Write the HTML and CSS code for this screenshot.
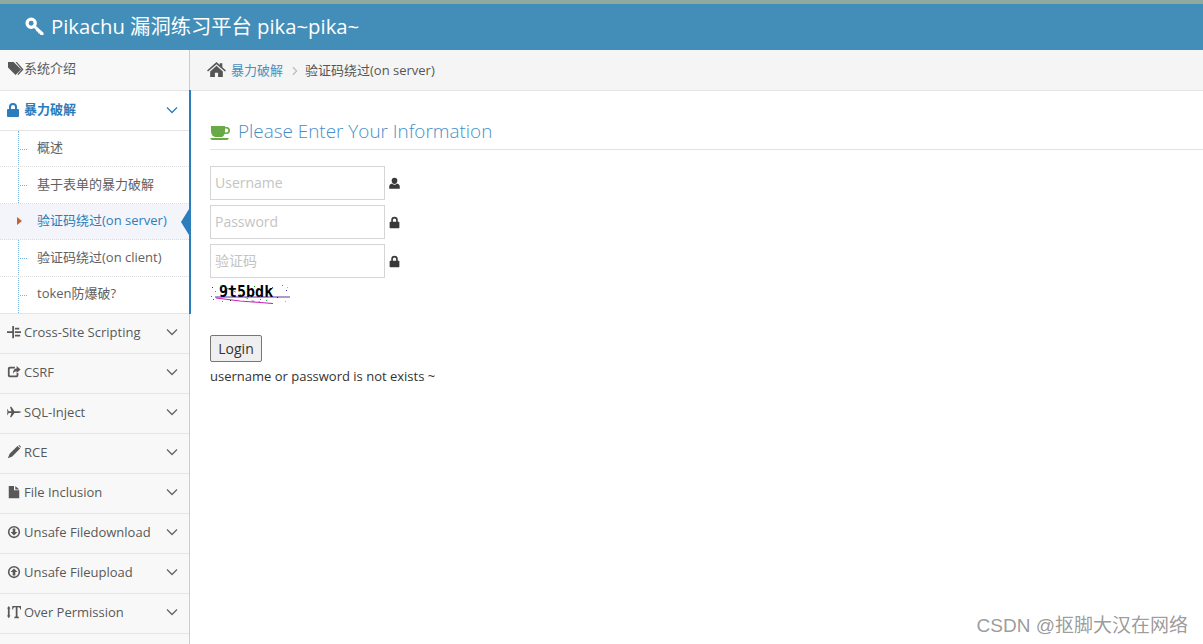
FILE: index.html
```html
<!DOCTYPE html>
<html lang="zh">
<head>
<meta charset="utf-8">
<title>Pikachu</title>
<link rel="stylesheet" href="styles.css">
</head>
<body>
<svg class="defs" width="0" height="0" aria-hidden="true">
  <symbol id="lock" viewBox="0 0 16 16"><path fill="currentColor" fill-rule="evenodd" d="M4 7V5a4 4 0 0 1 8 0v2h1a1 1 0 0 1 1 1v6a1 1 0 0 1-1 1H3a1 1 0 0 1-1-1V8a1 1 0 0 1 1-1h1zm2 0h4V5a2 2 0 0 0-4 0v2z"/></symbol>
  <symbol id="chev" viewBox="0 0 12 8"><path d="M1 1.500l5 5 5-5" fill="none" stroke="currentColor" stroke-width="1.300"/></symbol>
</svg>
<div class="strip"></div>
<header class="navbar">
  <svg class="key" viewBox="0 0 20 20"><circle cx="6.500" cy="6.500" r="4.300" fill="none" stroke="#fff" stroke-width="3.400"/><path fill="#fff" d="M9 11l2-2 8.500 7.500V19h-3l-1-1.500-1.500-.5-.5-1.500-1.500-.5-.5-1.500z"/></svg>
  <span>Pikachu 漏洞练习平台 pika~pika~</span>
</header>
<div class="layout">
  <nav class="sidebar">
    <div class="row first">
      <svg class="ic" viewBox="0 0 18 16"><path fill="currentColor" d="M1 1h6l8 8-6 6-8-8zM9 1h1.500l7 8-5.500 6-1-1 4.500-5z"/></svg>
      <span>系统介绍</span>
    </div>
    <div class="group">
      <div class="row open">
        <svg class="ic"><use href="#lock"/></svg>
        <span class="grow">暴力破解</span>
        <svg class="chev"><use href="#chev"/></svg>
      </div>
      <ul class="sub">
        <li>概述</li>
        <li>基于表单的暴力破解</li>
        <li class="active">验证码绕过(on server)</li>
        <li>验证码绕过(on client)</li>
        <li>token防爆破?</li>
      </ul>
    </div>
    <div class="row">
      <svg class="ic" viewBox="0 0 16 16"><path fill="currentColor" d="M6 1h2v14H6zM0 7h6v2H0zM9 3h5v2H9zM9 7h7v2H9zM9 11h6v2H9z"/></svg>
      <span class="grow">Cross-Site Scripting</span>
      <svg class="chev"><use href="#chev"/></svg>
    </div>
    <div class="row">
      <svg class="ic" viewBox="0 0 16 16"><path fill="currentColor" d="M3 2h6v2H4a1 1 0 0 0-1 1v6a1 1 0 0 0 1 1h6a1 1 0 0 0 1-1V9h2v3a2 2 0 0 1-2 2H3a2 2 0 0 1-2-2V4a2 2 0 0 1 2-2zM11 1l4.500 4L11 9V7C9 7 7.500 8 7 10c-.5-3.500 1.500-6 4-6z"/></svg>
      <span class="grow">CSRF</span>
      <svg class="chev"><use href="#chev"/></svg>
    </div>
    <div class="row">
      <svg class="ic" viewBox="0 0 16 16"><path fill="currentColor" d="M0 4l2 3h3L3.500 2H5l3.500 5H13c2 0 3 .5 3 1s-1 1-3 1H8.500L5 14H3.500L5 9H2l-2 3 .5-4z"/></svg>
      <span class="grow">SQL-Inject</span>
      <svg class="chev"><use href="#chev"/></svg>
    </div>
    <div class="row">
      <svg class="ic" viewBox="0 0 16 16"><path fill="currentColor" d="M12 1l3 3-9 9-5 2 2-5zM13 .5l1-.5 2 2-.5 1z"/></svg>
      <span class="grow">RCE</span>
      <svg class="chev"><use href="#chev"/></svg>
    </div>
    <div class="row">
      <svg class="ic" viewBox="0 0 16 16"><path fill="currentColor" d="M2 1h6v5h6v9H2zM9.500 1L14 5H9.500z"/></svg>
      <span class="grow">File Inclusion</span>
      <svg class="chev"><use href="#chev"/></svg>
    </div>
    <div class="row">
      <svg class="ic" viewBox="0 0 16 16"><path fill="currentColor" fill-rule="evenodd" d="M8 1a7 7 0 1 1 0 14A7 7 0 0 1 8 1zm0 1.800a5.200 5.200 0 1 0 0 10.400A5.200 5.200 0 0 0 8 2.800zM6.500 4h3v4H12l-4 4-4-4h2.500z"/></svg>
      <span class="grow">Unsafe Filedownload</span>
      <svg class="chev"><use href="#chev"/></svg>
    </div>
    <div class="row">
      <svg class="ic" viewBox="0 0 16 16"><path fill="currentColor" fill-rule="evenodd" d="M8 1a7 7 0 1 1 0 14A7 7 0 0 1 8 1zm0 1.800a5.200 5.200 0 1 0 0 10.400A5.200 5.200 0 0 0 8 2.800zM6.500 12h3V8H12L8 4 4 8h2.500z"/></svg>
      <span class="grow">Unsafe Fileupload</span>
      <svg class="chev"><use href="#chev"/></svg>
    </div>
    <div class="row">
      <svg class="ic" viewBox="0 0 16 16"><path fill="currentColor" d="M6 1h10v4h-1c0-1.500-.5-2.500-2-2.500h-1V13l1.500.5V15h-5v-1.500L10 13V2.500H9C7.500 2.500 7 3.500 7 5H6zM2 1l2 3H3v8h1l-2 3-2-3h1V4H0z"/></svg>
      <span class="grow">Over Permission</span>
      <svg class="chev"><use href="#chev"/></svg>
    </div>
    <div class="row"></div>
  </nav>
  <main class="main">
    <div class="crumbs">
      <svg class="home" viewBox="0 0 18 16"><path fill="#555" d="M9 1l3 2.700V2h2.500v3.900L18 9l-1 1-8-7-8 7-1-1zM9 4.500l6 5.300V15h-4.500v-4h-3v4H3V9.800z"/></svg>
      <a class="crumb-link">暴力破解</a>
      <svg class="sep" viewBox="0 0 8 12"><path d="M1.500 1.500L6 6l-4.500 4.500" fill="none" stroke="#bbb" stroke-width="1.400"/></svg>
      <span>验证码绕过(on server)</span>
    </div>
    <section class="content">
      <h1 class="title">
        <svg class="cup" viewBox="0 0 20 16"><path fill="#69aa46" d="M1 1h14v1h1.500a3 3 0 0 1 0 7H14.500c-.5 1.500-1.500 3-3 3h-6C3 12 1 9 1 6zM15 3.500V7.500h1.300a2 2 0 0 0 0-4zM0 13h19l-1.500 2h-16z"/></svg>
        <span>Please Enter Your Information</span>
      </h1>
      <form class="form">
        <div class="field">
          <input class="input" placeholder="Username">
          <svg class="fi" viewBox="0 0 16 16"><path fill="#393939" d="M8 1a3.500 3.500 0 0 1 3.500 3.500c0 2-1.500 4-3.500 4s-3.500-2-3.500-4A3.500 3.500 0 0 1 8 1zM5 8c.8 1 1.800 1.500 3 1.500S10.200 9 11 8c2 .5 3.500 1.500 3.500 4v2.500h-13V12C1.500 9.500 3 8.500 5 8z"/></svg>
        </div>
        <div class="field">
          <input class="input" placeholder="Password">
          <svg class="fi lock"><use href="#lock"/></svg>
        </div>
        <div class="field">
          <input class="input" placeholder="验证码">
          <svg class="fi lock"><use href="#lock"/></svg>
        </div>
        <svg class="captcha" viewBox="0 0 80 20" width="80" height="20">
          <text x="9" y="13" class="captcha-text">9t5bdk</text>
          <path d="M5 13h75" stroke="#30008a" stroke-width=".8" fill="none"/>
          <path d="M6 14l24 3 33 2.500" stroke="#d020c0" stroke-width="1.100" fill="none"/>
          <path d="M10 2l12 4 20 11 8 1" stroke="#127a3a" stroke-width=".7" fill="none" stroke-dasharray="3 4"/>
          <g>
            <rect x="2" y="3" width="1" height="1" fill="#2222dd"/><rect x="1" y="12" width="1" height="1" fill="#00aa55"/>
            <rect x="3" y="15" width="1" height="1" fill="#dd2222"/><rect x="5" y="7" width="1" height="1" fill="#00b0b0"/>
            <rect x="12" y="17" width="1" height="1" fill="#00ccaa"/><rect x="20" y="16" width="1" height="1" fill="#222"/>
            <rect x="34" y="1" width="1" height="1" fill="#cc9900"/><rect x="44" y="2" width="1" height="1" fill="#22aa22"/>
            <rect x="50" y="15" width="1" height="1" fill="#dd3399"/><rect x="56" y="16" width="1" height="1" fill="#22cc55"/>
            <rect x="62" y="3" width="1" height="1" fill="#bb3322"/><rect x="72" y="1" width="1" height="1" fill="#22aa55"/>
            <rect x="76" y="6" width="1" height="1" fill="#3333cc"/><rect x="77" y="3" width="1" height="1" fill="#ddbb00"/>
            <rect x="75" y="17" width="1" height="1" fill="#ddbb00"/><rect x="67" y="13" width="1" height="1" fill="#1111aa"/>
          </g>
        </svg>
        <button class="btn" type="button">Login</button>
      </form>
      <p class="msg">username or password is not exists ~</p>
    </section>
  </main>
</div>
<div class="watermark">CSDN @抠脚大汉在网络</div>
</body>
</html>
```
FILE: styles.css
```css
* { box-sizing: border-box; }
html, body { margin: 0; height: 100%; overflow: hidden; }
body {
  position: relative;
  display: flex;
  flex-direction: column;
  width: 1203px;
  height: 644px;
  background: #fff;
  color: #393939;
  font: 13px/1.5 "Open Sans", "Noto Sans CJK SC", sans-serif;
}
.defs { position: absolute; }
.strip { height: 4px; flex: none; background: #8fa9a1; }
.navbar {
  flex: none;
  height: 46px;
  display: flex;
  align-items: center;
  gap: 7px;
  padding: 0 0 2px 25px;
  background: #438eb9;
  color: #fff;
  font-size: 20.300px;
}
.key { width: 19px; height: 19px; }
.layout { flex: 1; display: flex; min-height: 0; }
.sidebar {
  flex: none;
  width: 190px;
  background: #f8f8f8;
  border-right: 1px solid #ccc;
}
.row {
  display: flex;
  align-items: center;
  height: 40px;
  padding: 0 11px 2px 7px;
  border-bottom: 1px solid #e5e5e5;
  color: #585858;
  font-size: 13px;
}
.row.first { height: 41px; padding-bottom: 3px; }
.row.open {
  background: #fff;
  color: #2b7dbc;
  font-weight: 700;
}
.group { position: relative; }
.group::after {
  content: "";
  position: absolute;
  top: -1px;
  right: -2px;
  bottom: 0;
  width: 2px;
  background: #2b7dbc;
}
.grow { flex: 1; white-space: nowrap; }
.ic { flex: none; width: 14px; height: 14px; margin-right: 3px; }
.first .ic { width: 17px; height: 15px; margin-right: 0; }
.open .ic { width: 16px; height: 16px; margin: 0 3px 0 -2px; }
.chev { flex: none; width: 12px; height: 8px; color: #666; margin-left: 4px; }
.open .chev { color: #2b7dbc; }
.sub {
  list-style: none;
  margin: 0;
  padding: 0;
  background: #fff;
  position: relative;
  border-bottom: 1px solid #e5e5e5;
}
.sub::before {
  content: "";
  position: absolute;
  left: 18px;
  top: 0;
  bottom: 0;
  border-left: 1px dotted #7db3dc;
}
.sub li {
  position: relative;
  height: 36.400px;
  padding: 0 0 1.200px 37px;
  display: flex;
  align-items: center;
  color: #616161;
  border-bottom: 1px dotted #ddd;
  white-space: nowrap;
}
.sub li:last-child { border-bottom: 0; }
.sub li::before {
  content: "";
  position: absolute;
  left: 20px;
  top: 18px;
  width: 7px;
  border-top: 1px dotted #7db3dc;
}
.sub li.active { background: #f3f5fa; color: #2b7dbc; }
.sub li.active::before {
  left: 17px;
  top: 13px;
  width: 0;
  border: 4px solid transparent;
  border-left: 5px solid #c86139;
  border-right: 0;
}
.sub li.active::after {
  content: "";
  position: absolute;
  right: 0;
  top: 5px;
  border: 13px solid transparent;
  border-right: 8px solid #2b7dbc;
  border-left: 0;
}
.main { flex: 1; min-width: 0; }
.crumbs {
  height: 41px;
  display: flex;
  align-items: center;
  padding: 1px 0 0 17px;
  background: #f5f5f5;
  border-bottom: 1px solid #e5e5e5;
  color: #555;
  font-size: 13px;
}
.home { width: 19px; height: 17px; margin: -2px 5px 0 0; }
.crumb-link { color: #4c8fbd; }
.sep { width: 8px; height: 10px; margin: 1px 6px 0 8px; }
.content { padding: 27px 0 0 20px; }
.title {
  display: flex;
  align-items: center;
  gap: 8px;
  height: 32px;
  margin: 0 0 16px;
  border-bottom: 1px solid #dce3ec;
  padding-bottom: 4px;
  color: #478fca;
  font-size: 18.900px;
  font-weight: 300;
}
.cup { width: 20px; height: 16px; margin-top: 2px; }
.form { display: flex; flex-direction: column; align-items: flex-start; }
.field { display: flex; align-items: center; height: 34px; margin-bottom: 5px; }
.input {
  width: 175px;
  height: 34px;
  padding: 0 4px 2px;
  border: 1px solid #d5d5d5;
  background: #fff;
  font: 14px "Open Sans", "Noto Sans CJK SC", sans-serif;
  outline: 0;
}
.input::placeholder { color: #c4c4c4; }
.fi { width: 13px; height: 13px; margin-left: 3px; color: #393939; }
.lock { margin-left: 2.500px; }
.captcha { display: block; margin-top: 1px; }
.captcha-text {
  font: 700 15px "DejaVu Sans Mono", monospace;
  fill: #000;
}
.btn {
  margin-top: 31px;
  width: 52px;
  height: 27px;
  padding: 0;
  background: #efefef;
  border: 1px solid #767676;
  border-radius: 2px;
  color: #333;
  font: 14px "Open Sans", sans-serif;
}
.msg { margin: 5px 0 0; font-size: 13px; line-height: 18px; color: #333; }
.watermark {
  position: absolute;
  right: 15px;
  bottom: 6px;
  color: rgba(90, 90, 90, .62);
  font: 19px/24px "Liberation Sans", "Noto Sans CJK SC", sans-serif;
}
```
